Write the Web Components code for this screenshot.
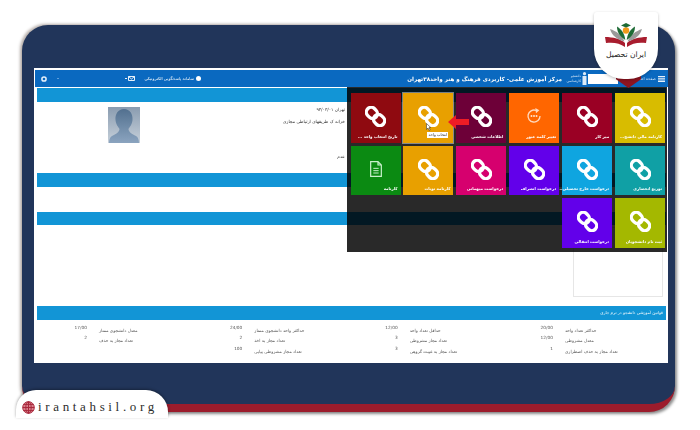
<!DOCTYPE html>
<html lang="fa">
<head>
<meta charset="utf-8">
<title>irantahsil</title>
<style>
    html, body { margin: 0; padding: 0; background: #fff; overflow: hidden; }
    body { font-family: "DejaVu Sans", sans-serif; width: 700px; height: 430px; }
</style>
</head>
<body>
<app-frame>
    <brand-badge slot="over"></brand-badge>
    <site-pill slot="over"></site-pill>
    <portal-screen>
        <portal-bar></portal-bar>
        <section-bar></section-bar>
        <profile-panel></profile-panel>
        <section-bar></section-bar>
        <blank-panel size="25"></blank-panel>
        <section-bar short></section-bar>
        <notes-panel></notes-panel>
        <section-bar label="قوانین آموزشی دانشجو در ترم جاری"></section-bar>
        <rules-panel>
            <rule-item label="معدل دانشجوی ممتاز" value="17/00"></rule-item>
            <rule-item label="حداکثر واحد دانشجوی ممتاز" value="24/00"></rule-item>
            <rule-item label="حداقل تعداد واحد" value="12/00"></rule-item>
            <rule-item label="حداکثر تعداد واحد" value="20/00"></rule-item>
            <rule-item label="تعداد مجاز به حذف" value="2"></rule-item>
            <rule-item label="تعداد مجاز به اخذ" value="2"></rule-item>
            <rule-item label="تعداد مجاز مشروطی" value="3"></rule-item>
            <rule-item label="معدل مشروطی" value="12/00"></rule-item>
            <span></span>
            <rule-item label="تعداد مجاز مشروطی پیاپی" value="100"></rule-item>
            <rule-item label="تعداد مجاز به غیبت گروهی" value="3"></rule-item>
            <rule-item label="تعداد مجاز به حذف اضطراری" value="1"></rule-item>
        </rules-panel>
        <tile-menu slot="over">
            <menu-tile color="#d8bc00" label="کارنامه مالی دانشج..."></menu-tile>
            <menu-tile color="#9a0024" label="میز کار"></menu-tile>
            <menu-tile color="#ff6600" label="تغییر کلمه عبور" icon="key"></menu-tile>
            <menu-tile color="#6d0038" label="اطلاعات شخصی"></menu-tile>
            <menu-tile color="#e8a000" tip="انتخاب واحد"></menu-tile>
            <menu-tile color="#8f0a10" label="تاریخ انتخاب واحد ..."></menu-tile>
            <menu-tile color="#10a0a5" label="توزیع انحصاری"></menu-tile>
            <menu-tile color="#0fa5e0" label="درخواست خارج تحصیلی..."></menu-tile>
            <menu-tile color="#6200ea" label="درخواست انصراف"></menu-tile>
            <menu-tile color="#d6006e" label="درخواست میهمانی"></menu-tile>
            <menu-tile color="#e8a000" label="کارنامه نوبات"></menu-tile>
            <menu-tile color="#0b8a12" label="کارنامه" icon="doc"></menu-tile>
            <menu-tile color="#a4b800" label="ثبت نام دانشجویان"></menu-tile>
            <menu-tile color="#6200ea" label="درخواست انتقالی"></menu-tile>
        </tile-menu>
    </portal-screen>
</app-frame>

<script>
class AppFrame extends HTMLElement {
    connectedCallback() {
        this.attachShadow({ mode: 'open' });
        this.shadowRoot.innerHTML = `
            <style>
                :host {
                    display: block;
                    position: relative;
                    box-sizing: border-box;
                    width: 653px;
                    height: 387px;
                    margin: 25px 0 0 22px;
                    padding: 43px 7px 41px 12px;
                    background: #21355a;
                    border-bottom: 8px solid #9c1c2c;
                    border-radius: 26px;
                    box-shadow: 2px 2px 3px rgba(0, 0, 0, 0.45), -2px -1px 3px rgba(70, 50, 40, 0.4);
                }
            </style>
            <slot></slot>
            <slot name="over"></slot>
        `;
    }
}

class BrandBadge extends HTMLElement {
    connectedCallback() {
        this.attachShadow({ mode: 'open' });
        this.shadowRoot.innerHTML = `
            <style>
                :host {
                    position: absolute;
                    top: -13px;
                    left: 572px;
                    width: 64px;
                    height: 67px;
                    z-index: 5;
                }
                .pointer {
                    position: absolute;
                    left: 22px;
                    top: 60px;
                    width: 25px;
                    height: 16px;
                    background: #8e1420;
                    clip-path: polygon(0 0, 100% 0, 100% 45%, 50% 100%, 0 45%);
                }
                .card {
                    position: absolute;
                    inset: 0;
                    box-sizing: border-box;
                    display: flex;
                    flex-direction: column;
                    align-items: center;
                    padding-top: 11px;
                    background: #fff;
                    border-radius: 3px 3px 30px 30px;
                    box-shadow: 0 1px 3px rgba(0, 0, 0, 0.25);
                }
                svg { display: block; }
                .name {
                    margin-top: 1px;
                    font: 7.6px "DejaVu Sans", sans-serif;
                    color: #222;
                    direction: rtl;
                    white-space: nowrap;
                }
            </style>
            <div class="pointer"></div>
            <div class="card">
                <svg width="42" height="26" viewBox="0 0 42 26">
                    <path d="M0 14 C8 14 16 16 20 20 V24 C15 20 8 19 1 20 Z" fill="#a81d2e"/>
                    <path d="M42 14 C34 14 26 16 22 20 V24 C27 20 34 19 41 20 Z" fill="#a81d2e"/>
                    <path d="M5 6 C11 8 17 12 19.5 18.5 C13 17 7 13 5 6 Z" fill="#9a9a9a"/>
                    <path d="M37 6 C31 8 25 12 22.5 18.5 C29 17 35 13 37 6 Z" fill="#9a9a9a"/>
                    <path d="M12 3.5 C16 6 19.5 10 20.3 17 C15.5 14 12 10 12 3.5 Z" fill="#1d6b35"/>
                    <path d="M30 3.5 C26 6 22.5 10 21.7 17 C26.5 14 30 10 30 3.5 Z" fill="#1d6b35"/>
                    <circle cx="21" cy="7.5" r="3.2" fill="#f09a1a"/>
                    <path d="M21 0 L26 2.5 L21 4.5 L16 2.5 Z" fill="#1d6b35"/>
                </svg>
                <span class="name">ایران تحصیل</span>
            </div>
        `;
    }
}

class SitePill extends HTMLElement {
    connectedCallback() {
        this.attachShadow({ mode: 'open' });
        this.shadowRoot.innerHTML = `
            <style>
                :host {
                    position: absolute;
                    left: -6px;
                    top: 365px;
                    width: 152px;
                    height: 28px;
                    display: flex;
                    align-items: center;
                    box-sizing: border-box;
                    padding: 6px 0 0 6px;
                    gap: 3px;
                    background: #fff;
                    border-radius: 20px 22px 0 0;
                    box-shadow: 0 -1px 3px rgba(0, 0, 0, 0.35);
                    z-index: 5;
                }
                span {
                    font: 13px "Liberation Serif", serif;
                    letter-spacing: 3.65px;
                    color: #2c2c2c;
                    white-space: nowrap;
                }
                svg { display: block; flex: none; }
            </style>
            <svg width="13" height="13" viewBox="0 0 13 13" fill="none" stroke="#a8283c" stroke-width="1">
                <circle cx="6.5" cy="6.5" r="5.8" fill="#d9808c"/>
                <ellipse cx="6.5" cy="6.5" rx="2.7" ry="5.8"/>
                <path d="M6.5 0.7 V12.3 M0.7 6.5 H12.3 M1.6 3.4 H11.4 M1.6 9.6 H11.4"/>
            </svg>
            <span>irantahsil.org</span>
        `;
    }
}

class PortalScreen extends HTMLElement {
    connectedCallback() {
        this.attachShadow({ mode: 'open' });
        this.shadowRoot.innerHTML = `
            <style>
                :host {
                    display: flex;
                    flex-direction: column;
                    position: relative;
                    box-sizing: border-box;
                    height: 295px;
                    padding-top: 2px;
                    background: #fff;
                    filter: blur(0.35px);
                }
            </style>
            <slot></slot>
            <slot name="over"></slot>
        `;
    }
}

class PortalBar extends HTMLElement {
    connectedCallback() {
        this.attachShadow({ mode: 'open' });
        this.shadowRoot.innerHTML = `
            <style>
                :host {
                    display: flex;
                    direction: rtl;
                    align-items: center;
                    flex: none;
                    box-sizing: border-box;
                    height: 17px;
                    margin: 0 0 1px 1px;
                    padding-right: 3px;
                    background: #0a69c0;
                    color: #fff;
                }
                svg { display: block; flex: none; }
                .home { font-size: 4px; margin-right: 2px; width: 38px; white-space: nowrap; color: #cfe2f5; }
                .search { width: 30px; height: 10px; background: #fff; }
                .person { margin-right: 1px; }
                .role { font-size: 3.3px; line-height: 5px; width: 13px; margin-right: 1px; color: #dcebf8; white-space: nowrap; }
                .title { font-size: 5.6px; font-weight: bold; margin-right: 6px; width: 154px; white-space: nowrap; }
                .support { display: flex; align-items: center; gap: 2px; margin-right: 207px; font-size: 4.1px; white-space: nowrap; width: 60px; }
                .dot { width: 5px; height: 5px; border-radius: 50%; background: #fff; flex: none; }
                .mail { margin-right: 6.5px; }
                .tick { width: 1.5px; height: 1.5px; margin-right: 1px; background: #fff; border-radius: 50%; flex: none; }
                .chevron { width: 2px; height: 1px; margin-right: 66px; background: #5f9fdc; flex: none; }
                .gear { margin-right: 10px; }
            </style>
            <svg width="7" height="6" viewBox="0 0 7 6" fill="#e6f0fa"><path d="M0 0H7V1.3H0ZM0 2.3H7V3.6H0ZM0 4.6H7V6H0Z"/></svg>
            <span class="home">صفحه اصلی</span>
            <span class="search"></span>
            <svg class="person" width="5" height="13" viewBox="0 0 5 13" fill="#dcebf8"><circle cx="2.5" cy="1.7" r="1.6"/><path d="M0.5 4H4.5V13H0.5Z"/></svg>
            <span class="role">دانشجو<br>کارشناسی</span>
            <span class="title">مرکز آموزش علمی- کاربردی فرهنگ و هنر واحد۳۸تهران</span>
            <span class="support"><i class="dot"></i>سامانه پاسخگویی الکترونیکی</span>
            <svg class="mail" width="7" height="5" viewBox="0 0 7 5" fill="none" stroke="#fff" stroke-width="0.9"><path d="M0.5 0.5H6.5V4.5H0.5ZM0.5 0.5L3.5 3L6.5 0.5"/></svg>
            <i class="tick"></i>
            <i class="chevron"></i>
            <svg class="gear" width="6" height="6" viewBox="0 0 6 6"><circle cx="3" cy="3" r="2.1" fill="none" stroke="#e6f0fa" stroke-width="1.5"/></svg>
        `;
    }
}

class SectionBar extends HTMLElement {
    connectedCallback() {
        const label = this.getAttribute('label') || '';
        this.attachShadow({ mode: 'open' });
        this.shadowRoot.innerHTML = `
            <style>
                :host {
                    display: flex;
                    direction: rtl;
                    align-items: center;
                    flex: none;
                    box-sizing: border-box;
                    height: 14px;
                    margin: 0 2px 0 2.5px;
                    padding-right: 3px;
                    background: #1295d6;
                    color: #fff;
                    font-size: 4.1px;
                    white-space: nowrap;
                }
                :host([short]) { height: 13px; }
            </style>
            <span>${label}</span>
        `;
    }
}

class BlankPanel extends HTMLElement {
    connectedCallback() {
        this.attachShadow({ mode: 'open' });
        this.shadowRoot.innerHTML = `<style>:host { display: block; flex: none; }</style>`;
        this.style.height = this.getAttribute('size') + 'px';
    }
}

class ProfilePanel extends HTMLElement {
    connectedCallback() {
        this.attachShadow({ mode: 'open' });
        this.shadowRoot.innerHTML = `
            <style>
                :host {
                    display: flex;
                    direction: rtl;
                    flex: none;
                    box-sizing: border-box;
                    height: 70.5px;
                    padding: 5px 323px 0 0;
                    font-size: 4.4px;
                    color: #333;
                    gap: 25px;
                }
                .info { width: 180px; display: flex; flex-direction: column; }
                .date { margin-bottom: 7px; }
                .state { margin-top: 30px; }
                .avatar { display: block; width: 32px; height: 36px; }
            </style>
            <div class="info">
                <span class="date">تهران ۹۳/۰۳/۰۱</span>
                <span>خزانه ک طریقهای ارتباطی مجازی</span>
                <span class="state">عدم</span>
            </div>
            <svg class="avatar" viewBox="0 0 32 36">
                <defs>
                    <linearGradient id="sky" x1="0" y1="0" x2="0" y2="1">
                        <stop offset="0" stop-color="#8a9cb0"/>
                        <stop offset="1" stop-color="#c6d0da"/>
                    </linearGradient>
                    <linearGradient id="bust" x1="0" y1="0" x2="0" y2="1">
                        <stop offset="0" stop-color="#52708f"/>
                        <stop offset="1" stop-color="#8ba4bf"/>
                    </linearGradient>
                </defs>
                <rect width="32" height="36" fill="url(#sky)"/>
                <path d="M16 2 C22 2 25 7 24.5 13 C24 18 21.5 20 20.5 22 C20.5 25 24 27 28 29 C30 30 31 33 31 36 H1 C1 33 2 30 4 29 C8 27 11.5 25 11.5 22 C10.5 20 8 18 7.5 13 C7 7 10 2 16 2 Z" fill="url(#bust)"/>
            </svg>
        `;
    }
}

class NotesPanel extends HTMLElement {
    connectedCallback() {
        this.attachShadow({ mode: 'open' });
        this.shadowRoot.innerHTML = `
            <style>
                :host {
                    display: flex;
                    justify-content: flex-end;
                    flex: none;
                    box-sizing: border-box;
                    height: 81px;
                    padding: 2px 5px 9px 0;
                }
                .box { width: 90px; border: 1px solid #e6e6e6; box-sizing: border-box; }
            </style>
            <div class="box"></div>
        `;
    }
}

class RulesPanel extends HTMLElement {
    connectedCallback() {
        this.attachShadow({ mode: 'open' });
        this.shadowRoot.innerHTML = `
            <style>
                :host {
                    display: grid;
                    grid-template-columns: repeat(4, 155.33px);
                    grid-auto-rows: 10.5px;
                    flex: 1;
                    padding: 5px 0 0 13px;
                }
            </style>
            <slot></slot>
        `;
    }
}

class RuleItem extends HTMLElement {
    connectedCallback() {
        this.attachShadow({ mode: 'open' });
        this.shadowRoot.innerHTML = `
            <style>
                :host {
                    display: flex;
                    gap: 12px;
                    font-size: 4.3px;
                    color: #555;
                    white-space: nowrap;
                }
                .value { width: 40px; text-align: right; }
                .label { direction: rtl; padding-top: 3px; }
            </style>
            <span class="value">${this.getAttribute('value')}</span>
            <span class="label">${this.getAttribute('label')}</span>
        `;
    }
}

class TileMenu extends HTMLElement {
    connectedCallback() {
        this.attachShadow({ mode: 'open' });
        this.shadowRoot.innerHTML = `
            <style>
                :host {
                    position: absolute;
                    left: 313px;
                    top: 19px;
                    width: 320px;
                    height: 165px;
                    box-sizing: border-box;
                    padding: 6px 2px 0 0;
                    background: rgba(0, 0, 0, 0.84);
                    z-index: 3;
                }
                .grid {
                    display: grid;
                    direction: rtl;
                    grid-template-columns: repeat(6, 50px);
                    grid-auto-rows: 49.5px;
                    gap: 3px 2.9px;
                }
                .arrow { position: absolute; left: 101px; top: 28px; z-index: 2; }
            </style>
            <div class="grid"><slot></slot></div>
            <svg class="arrow" width="21" height="14" viewBox="0 0 21 14"><path d="M0 7 L8 0 V4 H21 V10 H8 V14 Z" fill="#ee1c25"/></svg>
        `;
    }
}

class MenuTile extends HTMLElement {
    connectedCallback() {
        const label = this.getAttribute('label') || '';
        const tip = this.getAttribute('tip');
        const icon = this.getAttribute('icon') || 'link';
        const icons = {
            link: `<svg width="21" height="21" viewBox="0 0 24 24"><g fill="none" stroke="#fff" stroke-width="3.8" transform="rotate(45 12 12)"><rect x="-0.5" y="6.5" width="13.5" height="11" rx="5.5"/><rect x="11" y="6.5" width="13.5" height="11" rx="5.5"/></g></svg>`,
            key: `<svg width="16" height="16" viewBox="0 0 24 24" fill="none" stroke="#ffd9bd" stroke-width="2"><path d="M21 12 A9 9 0 1 1 15 3.6"/><path d="M14 0 L20 3.5 L15 8" fill="#ffd9bd" stroke="none"/><path d="M7 12 H17" stroke-width="3" stroke-dasharray="2.4 1.4"/></svg>`,
            doc: `<svg width="16" height="16" viewBox="0 0 24 24" fill="none" stroke="#c9f0cc" stroke-width="1.8"><path d="M4 1 H15 L20 6 V23 H4 Z M15 1 V6 H20"/><path d="M8 11 H16 M8 14.5 H16 M8 18 H16" stroke-width="1.5"/></svg>`
        };
        this.attachShadow({ mode: 'open' });
        this.shadowRoot.innerHTML = `
            <style>
                :host {
                    display: flex;
                    flex-direction: column;
                    align-items: center;
                    position: relative;
                    box-sizing: border-box;
                    padding-top: 13px;
                    color: #fff;
                }
                :host([icon]) { padding-top: 15px; }
                :host([tip]) { outline: 1px solid rgba(255, 255, 255, 0.45); }
                svg { display: block; flex: none; }
                .label {
                    position: absolute;
                    right: 3px;
                    bottom: 3px;
                    font-size: 3.95px;
                    font-weight: bold;
                    line-height: 7px;
                    white-space: nowrap;
                }
                .tip {
                    position: absolute;
                    left: 24px;
                    top: 39px;
                    width: 21px;
                    height: 6px;
                    background: #fff;
                    color: #222;
                    font-size: 3.8px;
                    line-height: 6px;
                    text-align: center;
                    white-space: nowrap;
                }
                .cursor { position: absolute; left: 23px; top: 30px; }
            </style>
            ${icons[icon]}
            ${label ? `<span class="label">${label}</span>` : ''}
            ${tip ? `<svg class="cursor" width="5" height="8" viewBox="0 0 5 8"><path d="M0.5 0.5 V6.5 L2 5 L3.2 7.5 L4.2 7 L3 4.6 H4.8 Z" fill="#fff" stroke="#222" stroke-width="0.5"/></svg><span class="tip">${tip}</span>` : ''}
        `;
        this.style.background = this.getAttribute('color');
    }
}

customElements.define('app-frame', AppFrame);
customElements.define('brand-badge', BrandBadge);
customElements.define('site-pill', SitePill);
customElements.define('portal-screen', PortalScreen);
customElements.define('portal-bar', PortalBar);
customElements.define('section-bar', SectionBar);
customElements.define('blank-panel', BlankPanel);
customElements.define('profile-panel', ProfilePanel);
customElements.define('notes-panel', NotesPanel);
customElements.define('rules-panel', RulesPanel);
customElements.define('rule-item', RuleItem);
customElements.define('tile-menu', TileMenu);
customElements.define('menu-tile', MenuTile);
</script>
</body>
</html>
